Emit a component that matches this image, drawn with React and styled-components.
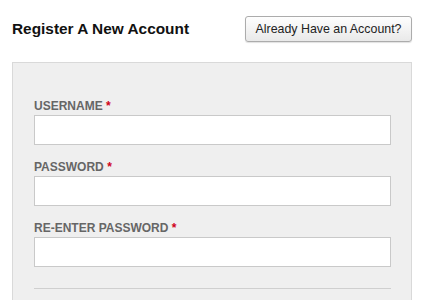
import React from "react";
import styled, { createGlobalStyle } from "styled-components";

const GlobalStyle = createGlobalStyle`
    body {
        margin: 0;
        background: #fff;
        font-family: "Liberation Sans", Arial, sans-serif;
        color: #222;
    }
`;

const Page = styled.div`
    width: 400px;
    padding: 16px 0 0 12px;
`;

const Header = styled.header`
    display: flex;
    align-items: center;
    justify-content: space-between;
    margin-bottom: 20px;
`;

const Title = styled.h2`
    margin: 0;
    font-size: 15.4px;
    font-weight: bold;
    color: #111;
`;

const SwitchButton = styled.button`
    box-sizing: border-box;
    height: 26px;
    width: 167px;
    padding: 0;
    font-family: inherit;
    font-size: 12.4px;
    color: #222;
    background: linear-gradient(#fefefe, #e9e9e9);
    border: 1px solid #acacac;
    border-radius: 3px;
    box-shadow: 0 1px 1px rgba(0, 0, 0, 0.12);
`;

const Panel = styled.section`
    background: #efefef;
    border: 1px solid #d9d9d9;
    padding: 36px 20px 40px 21px;
`;

const Field = styled.div`
    display: flex;
    flex-direction: column;
    gap: 2px;
    margin-bottom: 15px;

    &:last-of-type {
        margin-bottom: 0;
    }
`;

const Label = styled.label`
    font-size: 12px;
    line-height: 14px;
    font-weight: bold;
    color: #666;
    text-transform: uppercase;
`;

const Required = styled.span`
    color: #d0021b;
`;

const Input = styled.input`
    box-sizing: border-box;
    width: 100%;
    height: 30px;
    background: #fff;
    border: 1px solid #c9c9c9;
    outline: none;
`;

const Divider = styled.hr`
    margin: 21px 0 0;
    border: none;
    border-top: 1px solid #cfcfcf;
`;

const fields = [
    { id: "username", label: "Username", type: "text" },
    { id: "password", label: "Password", type: "password" },
    { id: "confirm", label: "Re-enter Password", type: "password" },
];

export default function App() {
    return (
        <Page>
            <GlobalStyle />
            <Header>
                <Title>Register A New Account</Title>
                <SwitchButton>Already Have an Account?</SwitchButton>
            </Header>
            <Panel>
                {fields.map((f) => (
                    <Field key={f.id}>
                        <Label htmlFor={f.id}>
                            {f.label} <Required>*</Required>
                        </Label>
                        <Input id={f.id} type={f.type} />
                    </Field>
                ))}
                <Divider />
            </Panel>
        </Page>
    );
}
